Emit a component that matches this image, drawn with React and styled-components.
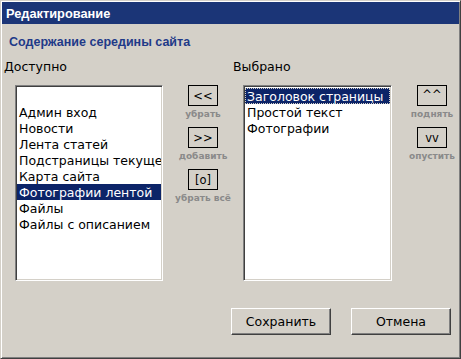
import styled, { createGlobalStyle } from "styled-components";

const GlobalStyle = createGlobalStyle`
    body {
        margin: 0;
        background: #d4d0c8;
    }
`

const available = [
    "",
    "Админ вход",
    "Новости",
    "Лента статей",
    "Подстраницы текущей",
    "Карта сайта",
    "Фотографии лентой",
    "Файлы",
    "Файлы с описанием",
]

const chosen = ["Заголовок страницы", "Простой текст", "Фотографии"]

const App = () => {
    return (
        <>
            <GlobalStyle />
            <Window>
                <TitleBar>Редактирование</TitleBar>
                <Body>
                    <Heading>Содержание середины сайта</Heading>
                    <Columns>
                        <ListColumn>
                            <Label>Доступно</Label>
                            <ListBox $indent={11} $width={148}>
                                {available.map((item, i) => (
                                    <Item key={i} $selected={item === "Фотографии лентой"}>{item}</Item>
                                ))}
                            </ListBox>
                        </ListColumn>

                        <ButtonColumn $pad={0} $align="center">
                            <ToolGroup>
                                <ToolButton>&lt;&lt;</ToolButton>
                                <ToolLabel>убрать</ToolLabel>
                            </ToolGroup>
                            <ToolGroup>
                                <ToolButton>&gt;&gt;</ToolButton>
                                <ToolLabel>добавить</ToolLabel>
                            </ToolGroup>
                            <ToolGroup>
                                <ToolButton>[o]</ToolButton>
                                <ToolLabel>убрать всё</ToolLabel>
                            </ToolGroup>
                        </ButtonColumn>

                        <ListColumn $pad={2}>
                            <Label>Выбрано</Label>
                            <ListBox $indent={10} $width={149}>
                                {chosen.map((item, i) => (
                                    <Item key={i} $selected={i === 0} $focused={i === 0}>{item}</Item>
                                ))}
                            </ListBox>
                        </ListColumn>

                        <ButtonColumn $pad={25} $align="flex-start">
                            <ToolGroup>
                                <ToolButton $top>^^</ToolButton>
                                <ToolLabel>поднять</ToolLabel>
                            </ToolGroup>
                            <ToolGroup>
                                <ToolButton>vv</ToolButton>
                                <ToolLabel>опустить</ToolLabel>
                            </ToolGroup>
                        </ButtonColumn>
                    </Columns>

                    <Footer>
                        <PushButton>Сохранить</PushButton>
                        <PushButton>Отмена</PushButton>
                    </Footer>
                </Body>
            </Window>
        </>
    );
}

export default App;



const Window = styled.div`
    box-sizing: border-box;
    width: 461px;
    height: 359px;
    padding: 1px;
    background: #d4d0c8;
    border: 1px solid;
    border-color: #d4d0c8 #404040 #404040 #d4d0c8;
    box-shadow: inset 1px 1px 0 #ffffff, inset -1px -1px 0 #808080;
    display: flex;
    flex-direction: column;
    font-family: "DejaVu Sans", "Liberation Sans", sans-serif;
`

const TitleBar = styled.div`
    height: 22px;
    padding-left: 4px;
    display: flex;
    align-items: center;
    background: #1b3577;
    color: #ffffff;
    font-family: "Liberation Sans", Arial, sans-serif;
    font-weight: bold;
    font-size: 12.8px;
`

const Body = styled.div`
    flex: 1;
    padding: 0 8px 0 2px;
    display: flex;
    flex-direction: column;
`

const Heading = styled.div`
    margin: 10px 0 0 5px;
    line-height: 16px;
    color: #1f3a88;
    font-family: "Liberation Sans", Arial, sans-serif;
    font-weight: bold;
    font-size: 12.5px;
`

const Columns = styled.div`
    margin-top: 8px;
    display: grid;
    grid-template-columns: 171px 56px 161px 1fr;
`

const ListColumn = styled.div`
    padding-left: ${p => p.$pad || 0}px;
    display: flex;
    flex-direction: column;
`

const Label = styled.div`
    height: 16px;
    line-height: 17px;
    font-size: 12.5px;
    color: #000000;
`

const ListBox = styled.div`
    box-sizing: border-box;
    margin: 11px 0 0 ${p => p.$indent}px;
    width: ${p => p.$width}px;
    height: 196px;
    padding: 2px 0 1px;
    background: #ffffff;
    border: 1px solid;
    border-color: #808080 #ffffff #ffffff #808080;
    box-shadow: inset 1px 1px 0 #404040, inset -1px -1px 0 #d4d0c8;
    overflow: hidden;
`

const Item = styled.div`
    box-sizing: border-box;
    height: 16px;
    margin: 0 1px;
    padding-left: 2px;
    line-height: 17px;
    font-size: 12.5px;
    white-space: nowrap;
    overflow: hidden;
    background: ${p => p.$selected ? "#0c2468" : "transparent"};
    color: ${p => p.$selected ? "#ffffff" : "#000000"};
    outline: ${p => p.$focused ? "1px dotted #d4d0c8" : "none"};
    outline-offset: -1px;
`

const ButtonColumn = styled.div`
    padding: 27px 0 0 ${p => p.$pad}px;
    display: flex;
    flex-direction: column;
    align-items: ${p => p.$align};
    gap: 5px;
`

const ToolGroup = styled.div`
    width: 30px;
    display: flex;
    flex-direction: column;
    align-items: center;
`

const ToolButton = styled.div`
    box-sizing: border-box;
    width: 30px;
    height: 21px;
    padding-top: ${p => p.$top ? "2px" : "0"};
    border: 1px solid #000000;
    display: flex;
    align-items: ${p => p.$top ? "flex-start" : "center"};
    justify-content: center;
    font-family: "DejaVu Sans", "Liberation Sans", sans-serif;
    font-size: 11.5px;
    color: #000000;
`

const ToolLabel = styled.div`
    height: 16px;
    line-height: 17px;
    white-space: nowrap;
    font-size: 9px;
    font-weight: bold;
    color: #8a8a8a;
`

const Footer = styled.div`
    margin-top: 27px;
    display: flex;
    justify-content: flex-end;
    gap: 20px;
`

const PushButton = styled.button`
    box-sizing: border-box;
    width: 100px;
    height: 27px;
    padding: 0;
    background: #d4d0c8;
    border: 1px solid;
    border-color: #ffffff #404040 #404040 #ffffff;
    box-shadow: inset -1px -1px 0 #808080;
    font-family: "DejaVu Sans", "Liberation Sans", sans-serif;
    font-size: 12.5px;
    color: #000000;
`
